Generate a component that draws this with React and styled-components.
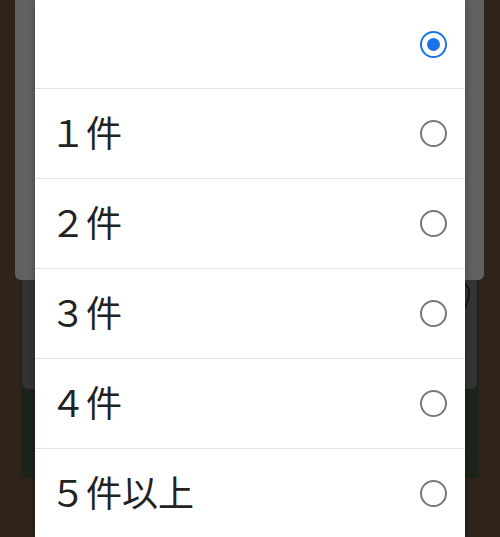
import React, { useState } from 'react'
import styled, { createGlobalStyle } from 'styled-components'

const GlobalStyle = createGlobalStyle`
  html, body {
    margin: 0;
    padding: 0;
    background: #30231a;
  }
  body {
    font-family: "Noto Sans CJK JP", "Noto Sans", sans-serif;
  }
`

const Page = styled.div`
  position: relative;
  width: 500px;
  height: 537px;
  overflow: hidden;
  background: #30231a;
  display: flex;
  flex-direction: column;
`

// the page behind the scrim
const TopCard = styled.div`
  height: 280px;
  margin: 0 16px 0 15px;
  background: #616161;
  border-radius: 0 0 6px 6px;
`

const Section = styled.div`
  margin: 0 21px;
  height: 198px;
  background: #1b231b;
`

const DarkCard = styled.div`
  position: relative;
  height: 109px;
  margin: 0 2px 0 1px;
  background: #333333;
  border-radius: 0 0 7px 7px;
`

const CardIcon = styled.svg`
  position: absolute;
  right: 3px;
  top: 1px;
`

const Dialog = styled.div`
  position: absolute;
  top: 0;
  left: 35px;
  width: 430px;
  background: #ffffff;
  box-shadow: 0 0 6px rgba(0, 0, 0, 0.35);
`

const Row = styled.label`
  display: flex;
  align-items: center;
  justify-content: space-between;
  box-sizing: border-box;
  height: ${p => (p.$first ? '88px' : '90px')};
  border-top: ${p => (p.$first ? 'none' : '1px solid #e2e2e2')};
  padding: 0 18px 0 15px;
  cursor: pointer;
`

const Label = styled.span`
  font-size: 36px;
  line-height: 1;
  padding-bottom: 6px;
  color: #222222;
`

const Radio = styled.span`
  box-sizing: border-box;
  width: 27px;
  height: 27px;
  border-radius: 50%;
  border: 2.5px solid ${p => (p.$checked ? '#1a73e8' : '#777777')};
  display: flex;
  align-items: center;
  justify-content: center;

  &::after {
    content: '';
    width: 13px;
    height: 13px;
    border-radius: 50%;
    background: #1a73e8;
    display: ${p => (p.$checked ? 'block' : 'none')};
  }
`

const options = ['', '１件', '２件', '３件', '４件', '５件以上']

export default function App() {
  const [selected, setSelected] = useState(0)

  return <>
    <GlobalStyle />
    <Page>
      <TopCard />
      <Section>
        <DarkCard>
          <CardIcon width="12" height="30" viewBox="0 0 12 30">
            <path d="M2 2 C8 6, 9 14, 3 26" fill="none" stroke="#1a120c" strokeWidth="1.8" strokeLinecap="round" />
          </CardIcon>
        </DarkCard>
      </Section>
      <Dialog>
        {options.map((opt, i) => (
          <Row key={i} $first={i === 0} onClick={() => setSelected(i)}>
            <Label>{opt}</Label>
            <Radio $checked={selected === i} />
          </Row>
        ))}
      </Dialog>
    </Page>
  </>
}
